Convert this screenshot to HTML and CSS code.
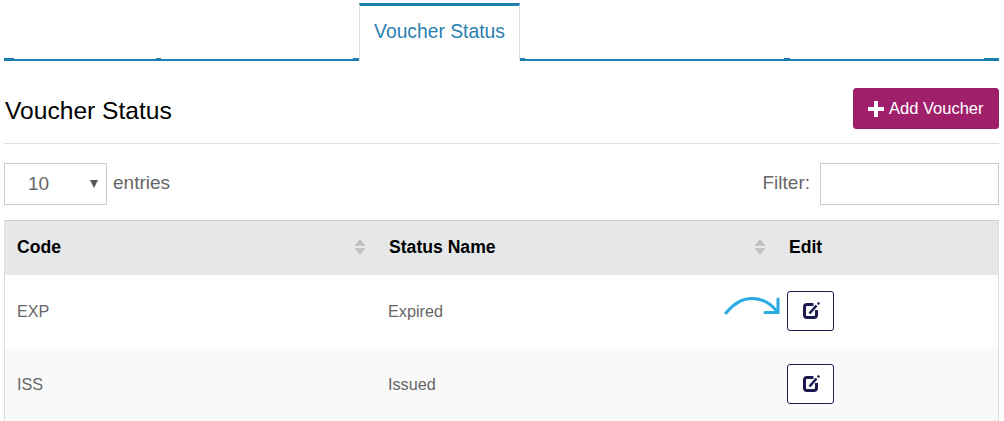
FILE: index.html
```html
<!DOCTYPE html>
<html lang="en">
<head>
<meta charset="utf-8">
<title>Voucher Status</title>
<link rel="stylesheet" href="styles.css">
</head>
<body>
<nav class="tabs">
  <span class="seg stub w10"></span><span class="seg w142"></span><span class="seg stub w5"></span><span class="seg w192"></span><span class="seg stub w6"></span>
  <a class="tab" href="#">Voucher Status</a>
  <span class="seg stub w5"></span><span class="seg w259"></span><span class="seg stub w6"></span><span class="seg w194"></span><span class="seg stub w15"></span>
</nav>
<header class="title-row">
  <h1 class="title">Voucher Status</h1>
  <button class="add-btn" type="button">
    <svg class="plus" width="16" height="16" viewBox="0 0 16 16"><path d="M6 0h4v6h6v4h-6v6H6v-6H0V6h6z" fill="#fff"/></svg>
    Add Voucher
  </button>
</header>
<div class="controls">
  <label class="length">
    <span class="select-wrap"><select class="select"><option>10</option><option>25</option><option>50</option></select></span>
    <span class="control-text">entries</span>
  </label>
  <label class="filter"><span class="control-text">Filter:</span> <input class="filter-input" type="text"></label>
</div>
<table class="grid">
  <thead>
    <tr>
      <th class="col-code">Code<svg class="sort" width="12" height="18" viewBox="0 0 12 18"><path d="M6 1l5.500 7H.5z" fill="#c0c2c4"/><path d="M6 17L.5 10h11z" fill="#c0c2c4"/></svg></th>
      <th class="col-name">Status Name<svg class="sort sort-name" width="12" height="18" viewBox="0 0 12 18"><path d="M6 1l5.500 7H.5z" fill="#c0c2c4"/><path d="M6 17L.5 10h11z" fill="#c0c2c4"/></svg></th>
      <th class="col-edit">Edit</th>
    </tr>
  </thead>
  <tbody>
    <tr>
      <td>EXP</td>
      <td class="name">Expired</td>
      <td class="edit-cell">
        <svg class="arrow" width="56" height="22" viewBox="0 0 56 22"><path d="M2 18C10 8 19 3.500 28 3.500c9 0 18 4 25 13" fill="none" stroke="#29abe2" stroke-width="3" stroke-linecap="round"/><path d="M54 4v13.500H41" fill="none" stroke="#29abe2" stroke-width="3" stroke-linecap="round"/></svg>
        <button class="edit-btn" type="button" aria-label="Edit"><svg width="19" height="20" viewBox="0 0 19 20"><path d="M12.500 3.500H6A2.500 2.500 0 0 0 3.500 6v8A2.500 2.500 0 0 0 6 16.500h7a2.500 2.500 0 0 0 2.500-2.500V9" fill="none" stroke="#1e1a52" stroke-width="3"/><path d="M8.500 12.500l7-8" stroke="#1e1a52" stroke-width="2.600"/><circle cx="17.500" cy="2.500" r="1.300" fill="#1e1a52"/></svg></button>
      </td>
    </tr>
    <tr class="alt">
      <td>ISS</td>
      <td class="name">Issued</td>
      <td class="edit-cell">
        <button class="edit-btn" type="button" aria-label="Edit"><svg width="19" height="20" viewBox="0 0 19 20"><path d="M12.500 3.500H6A2.500 2.500 0 0 0 3.500 6v8A2.500 2.500 0 0 0 6 16.500h7a2.500 2.500 0 0 0 2.500-2.500V9" fill="none" stroke="#1e1a52" stroke-width="3"/><path d="M8.500 12.500l7-8" stroke="#1e1a52" stroke-width="2.600"/><circle cx="17.500" cy="2.500" r="1.300" fill="#1e1a52"/></svg></button>
      </td>
    </tr>
  </tbody>
</table>
</body>
</html>
```
FILE: styles.css
```css
* { box-sizing: border-box; }
html, body { height: 421px; overflow: hidden; }
body {
  margin: 0;
  padding: 3px 5px 0 4px;
  background: #fff;
  color: #666;
  font-family: "Liberation Sans", Arial, sans-serif;
  font-size: 16px;
}
.tabs { display: flex; align-items: flex-end; height: 58px; }
.seg { display: block; height: 2px; background: #1a7fb0; }
.seg.stub { height: 3px; }
.w5 { width: 5px; } .w6 { width: 6px; } .w10 { width: 10px; } .w15 { width: 15px; }
.w142 { width: 142px; } .w192 { width: 192px; } .w194 { width: 194px; } .w259 { width: 259px; }
.tab {
  width: 161px;
  height: 58px;
  padding-top: 14px;
  border-top: 3px solid #1a7fb0;
  border-left: 1px solid #ddd;
  border-right: 1px solid #ddd;
  background: #fff;
  color: #2a80b0;
  font-size: 19.300px;
  line-height: 24px;
  text-align: center;
  text-decoration: none;
}
.title-row {
  display: flex;
  justify-content: space-between;
  align-items: flex-start;
  height: 83px;
  padding-top: 27px;
  border-bottom: 1px solid #ddd;
}
.title { margin: 0 0 0 1px; padding-top: 9px; color: #000; font-size: 24.600px; font-weight: 400; line-height: 28px; }
.add-btn {
  display: flex;
  align-items: center;
  gap: 5px;
  width: 146px;
  height: 41px;
  padding: 0 0 0 14px;
  border: 1px solid #9a1f68;
  border-radius: 3px;
  background: #a01f6b;
  color: #fff;
  font: 16.500px "Liberation Sans", Arial, sans-serif;
}
.plus { flex: none; }
.controls {
  display: flex;
  justify-content: space-between;
  align-items: center;
  height: 42px;
  margin-top: 19px;
  font-size: 19px;
  color: #666;
}
.length, .filter { display: flex; align-items: center; }
.control-text { padding-bottom: 2px; }
.select-wrap { position: relative; display: block; width: 103px; height: 42px; margin-right: 6px; }
.select-wrap::after {
  content: "";
  position: absolute;
  left: 86px;
  top: 17px;
  border-left: 4px solid transparent;
  border-right: 4px solid transparent;
  border-top: 8px solid #555;
}
.select {
  appearance: none;
  width: 100%;
  height: 100%;
  padding: 0 0 2px 23px;
  border: 1px solid #ccc;
  border-radius: 0;
  background: #fff;
  color: #666;
  font: 19px "Liberation Sans", Arial, sans-serif;
}
.filter { gap: 10px; }
.filter-input { width: 179px; height: 42px; border: 1px solid #ccc; border-radius: 0; background: #fff; outline: 0; }
.grid {
  width: 995px;
  margin-top: 15px;
  border-collapse: separate;
  border-spacing: 0;
  table-layout: fixed;
  border-left: 1px solid #ddd;
  border-right: 1px solid #ddd;
  font-size: 16.200px;
}
.grid th {
  position: relative;
  height: 55px;
  padding: 0 0 2px 12px;
  border-top: 1px solid #ccc;
  background: #e6e7e9;
  color: #000;
  font-size: 17.600px;
  font-weight: 700;
  text-align: left;
}
.col-code { width: 373px; }
.grid .col-name { width: 399px; padding-left: 11px; }
.sort { position: absolute; right: 12px; top: 17px; }
.sort-name { right: 11px; }
.grid td { height: 73px; padding: 0 0 0 12px; background: #fff; color: #666; }
.grid .alt td { background: #f9f9f9; }
.grid td.name { padding-left: 10px; }
.grid td.edit-cell { position: relative; padding: 0 0 2px 10px; }
.arrow { position: absolute; left: -53px; top: 20px; }
.edit-btn {
  display: flex;
  align-items: center;
  justify-content: center;
  width: 47px;
  height: 40px;
  padding: 0;
  border: 1px solid #1e1a52;
  border-radius: 3px;
  background: #fff;
}
```
